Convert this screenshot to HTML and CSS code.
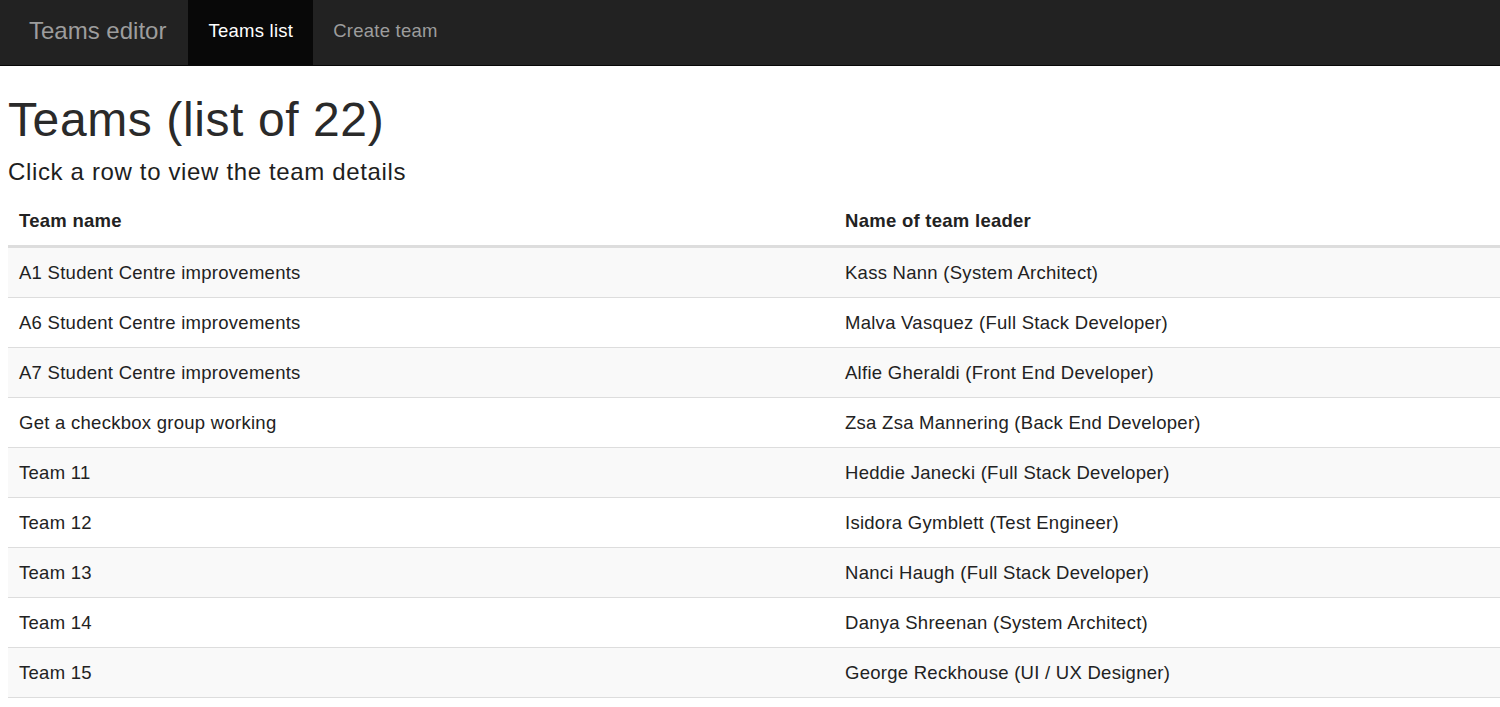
FILE: index.html
```html
<!DOCTYPE html>
<html lang="en">
<head>
<meta charset="utf-8">
<title>Teams editor</title>
<link rel="stylesheet" href="styles.css">
</head>
<body>
<nav class="navbar">
  <a class="brand" href="#">Teams editor</a>
  <a class="nav-link active" href="#">Teams list</a>
  <a class="nav-link" href="#">Create team</a>
</nav>
<main class="page">
  <h1 class="title">Teams (list of 22)</h1>
  <h4 class="subtitle">Click a row to view the team details</h4>
  <table class="teams">
    <colgroup><col class="col-name"><col></colgroup>
    <thead>
      <tr><th>Team name</th><th>Name of team leader</th></tr>
    </thead>
    <tbody>
      <tr><td>A1 Student Centre improvements</td><td>Kass Nann (System Architect)</td></tr>
      <tr><td>A6 Student Centre improvements</td><td>Malva Vasquez (Full Stack Developer)</td></tr>
      <tr><td>A7 Student Centre improvements</td><td>Alfie Gheraldi (Front End Developer)</td></tr>
      <tr><td>Get a checkbox group working</td><td>Zsa Zsa Mannering (Back End Developer)</td></tr>
      <tr><td>Team 11</td><td>Heddie Janecki (Full Stack Developer)</td></tr>
      <tr><td>Team 12</td><td>Isidora Gymblett (Test Engineer)</td></tr>
      <tr><td>Team 13</td><td>Nanci Haugh (Full Stack Developer)</td></tr>
      <tr><td>Team 14</td><td>Danya Shreenan (System Architect)</td></tr>
      <tr><td>Team 15</td><td>George Reckhouse (UI / UX Designer)</td></tr>
    </tbody>
  </table>
</main>
</body>
</html>
```

FILE: styles.css
```css
html, body {
  margin: 0;
  padding: 0;
  background: #fff;
  font-family: "Liberation Sans", Arial, Helvetica, sans-serif;
  color: #333;
}

.navbar {
  display: flex;
  align-items: stretch;
  height: 65px;
  background: #222;
  border-bottom: 1px solid #080808;
}

.brand,
.nav-link {
  display: flex;
  align-items: center;
  padding-bottom: 3px;
  text-decoration: none;
  color: #9d9d9d;
  box-sizing: border-box;
}

.brand {
  font-size: 24px;
  padding-left: 29px;
  padding-right: 22px;
}

.nav-link {
  font-size: 18.5px;
  letter-spacing: 0.25px;
  padding-left: 20px;
  padding-right: 20px;
}

.nav-link.active {
  background: #080808;
  color: #fff;
}

.page {
  padding: 0 0 0 8px;
}

.title {
  margin: 27px 0 13px;
  font-size: 48px;
  line-height: 53px;
  font-weight: 500;
  letter-spacing: 0.6px;
  color: #2a2a2a;
}

.subtitle {
  margin: 0 0 11px;
  font-size: 24px;
  line-height: 26px;
  font-weight: 500;
  letter-spacing: 0.65px;
  color: #1e1e1e;
}

.teams {
  width: 100%;
  border-collapse: separate;
  border-spacing: 0;
  font-size: 18.5px;
  line-height: 27px;
  letter-spacing: 0.27px;
  color: #222;
}

.col-name {
  width: 826px;
}

.teams th,
.teams td {
  text-align: left;
  padding: 11px;
  vertical-align: top;
}

.teams th {
  font-weight: bold;
  border-bottom: 3px solid #ddd;
}

.teams td {
  border-bottom: 1px solid #ddd;
}

.teams tbody tr:nth-child(odd) td {
  background: #f9f9f9;
}
```
